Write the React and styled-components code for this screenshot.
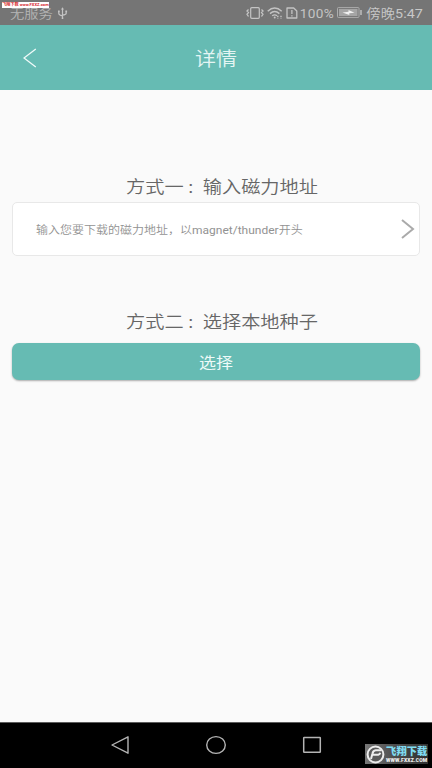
import React from 'react';
import styled, { createGlobalStyle } from 'styled-components';

const GlobalStyle = createGlobalStyle`
  * {
    box-sizing: border-box;
  }

  body {
    margin: 0;
    background-color: #fafafa;
    font-family: Roboto, 'Noto Sans CJK SC', sans-serif;
  }
`;

const Screen = styled.div`
  width: 432px;
  height: 768px;
  display: flex;
  flex-direction: column;
  background-color: #fafafa;
  overflow: hidden;
`;

const Text = styled.span`
  display: block;
  white-space: nowrap;
  line-height: 1;
  font-weight: ${({ $weight }) => $weight || 350};
  font-size: ${({ $size }) => $size}px;
  letter-spacing: ${({ $spacing }) => $spacing || 0}px;
  color: ${({ $color }) => $color};
  transform: scaleY(0.9);
`;

const Latin = styled.span`
  font-weight: 400;
`;

const StatusBar = styled.div`
  position: relative;
  display: flex;
  align-items: center;
  height: 25px;
  flex-shrink: 0;
  padding: 1px 9px 0 10px;
  background-color: #757575;
`;

const StatusIcons = styled.div`
  display: flex;
  align-items: center;
  margin-left: auto;
`;

const Icon = styled.svg`
  display: block;
  flex-shrink: 0;
  margin-left: ${({ $gap }) => $gap || 0}px;
  fill: none;
  stroke: ${({ $color }) => $color || '#c4c4c4'};
`;

const StatusText = styled(Text)`
  margin-left: ${({ $gap }) => $gap || 0}px;
  padding-top: ${({ $top }) => $top || 1}px;
`;

const SiteTag = styled.div`
  position: absolute;
  top: 2px;
  left: 2px;
  width: 47px;
  height: 6px;
  display: flex;
  align-items: center;
  justify-content: center;
  gap: 1px;
  background-color: #fff;
  color: #d8262c;
  font-size: 4.1px;
  font-weight: 700;
  line-height: 6px;
  white-space: nowrap;
`;

const Header = styled.header`
  display: grid;
  grid-template-columns: 60px 1fr 60px;
  align-items: center;
  justify-items: center;
  height: 65px;
  flex-shrink: 0;
  padding-top: 5px;
  background-color: #66bbb3;
`;

const BackButton = styled.button`
  display: flex;
  margin-bottom: 5px;
  padding: 0;
  border: 0;
  background: none;
`;

const Content = styled.main`
  flex: 1;
  padding: 88px 12px 0;
`;

const Section = styled.section`
  display: flex;
  flex-direction: column;
  align-items: center;
  margin-bottom: ${({ $bottom }) => $bottom || 0}px;
`;

const SectionTitle = styled(Text)`
  height: 19px;
  margin-bottom: ${({ $bottom }) => $bottom}px;
  padding-left: 12px;
`;

const Colon = styled.span`
  display: inline-block;
  width: 19.2px;
  padding-left: 3.2px;
  font-size: 16px;
`;

const AddressField = styled.div`
  display: flex;
  align-items: center;
  justify-content: space-between;
  width: 100%;
  height: 54px;
  padding: 0 4px 0 23px;
  border: 1px solid #e8e8e8;
  border-radius: 5px;
  background-color: #fff;
`;

const Hint = styled(Text)`
  padding-top: 3px;
`;

const SelectButton = styled.button`
  display: flex;
  align-items: center;
  justify-content: center;
  width: 100%;
  height: 37px;
  padding: 3px 0 0;
  border: 0;
  border-radius: 7px;
  background-color: #66bbb3;
  box-shadow: 0 1px 2px rgba(0, 0, 0, 0.32);
  font-family: inherit;
`;

const NavBar = styled.nav`
  position: relative;
  display: flex;
  align-items: center;
  justify-content: center;
  gap: 76px;
  height: 46px;
  flex-shrink: 0;
  padding-bottom: 1px;
  border-top: 1px solid #5c5c5c;
  background-color: #000;
`;

const Watermark = styled.div`
  position: absolute;
  left: 365px;
  top: 21px;
  width: 63px;
  height: 20px;
  display: flex;
  align-items: center;
  gap: 1px;
  padding-left: 1px;
  background: linear-gradient(90deg, #777, #4a4a4a 50%, #303030);
`;

const WatermarkText = styled.div`
  display: flex;
  flex-direction: column;
  align-items: center;
  white-space: nowrap;
`;

const BrandName = styled.span`
  color: #7fdcf2;
  font-size: 10.3px;
  font-weight: 900;
  line-height: 12px;
`;

const BrandUrl = styled.span`
  color: #f2f2f2;
  font-size: 5px;
  font-weight: 900;
  line-height: 5px;
  letter-spacing: 0.2px;
`;

const UsbIcon = () => (
  <Icon $gap={4} width="11" height="13" viewBox="0 0 11 13" strokeWidth="1.2">
    <path d="M5.5 2v9M1.8 4.5v2q0 1.6 3.7 2.3M9.2 4.5v1.7q0 1.4-3.7 2" />
    <path d="M5.5 0.3L4 2.6h3zM1 3.6h1.7v1.6H1zM8.4 3.6h1.7v1.6H8.4zM4.7 10.6h1.6v1.4H4.7z" fill="#c4c4c4" stroke="none" />
  </Icon>
);

const VibrateIcon = () => (
  <Icon width="18" height="12" viewBox="0 0 18 12">
    <rect x="4.7" y="0.7" width="8.6" height="10.6" rx="1" strokeWidth="1.2" />
    <path d="M2.5 2.5L1 4l1.5 1.5L1 7.2l1.5 2.3M15.5 2.5L17 4l-1.5 1.5L17 7.2l-1.5 2.3" strokeWidth="1.3" />
  </Icon>
);

const WifiIcon = () => (
  <Icon $gap={3} width="17" height="12" viewBox="0 0 17 12" strokeWidth="1.4">
    <path d="M0.7 4.2q7-6.2 14 0M3 6.6q4.7-4 9.4 0M5.2 8.8q2.5-1.9 4.8 0" />
    <circle cx="7.7" cy="10.6" r="1" fill="#c4c4c4" stroke="none" />
    <path d="M10.8 8.8v2.6M14 8.8v2.6" strokeDasharray="1.3 0.6" />
  </Icon>
);

const SimIcon = () => (
  <Icon $gap={2} width="12" height="12" viewBox="0 0 12 12" strokeWidth="1.3">
    <path d="M1 1h6.7L10.8 4v7H1z" strokeLinejoin="round" />
    <path d="M5.9 3v4M5.9 8.2v1.4" />
  </Icon>
);

const BatteryIcon = () => (
  <Icon $gap={3} width="25" height="11" viewBox="0 0 25 11">
    <rect x="0.5" y="0.6" width="21.5" height="9.8" rx="0.8" stroke="#adadad" />
    <rect x="2" y="2" width="18.5" height="7" fill="#a5a5a5" stroke="none" />
    <path d="M5.5 5.4l6-.7V3l6 2.7-5.2.6v1.8z" fill="#f0f0f0" stroke="none" />
    <path d="M24 3v5" strokeWidth="1.4" />
  </Icon>
);

const BrandLogo = () => (
  <Icon width="19" height="19" viewBox="0 0 19 19">
    <circle cx="9.5" cy="9.5" r="7.9" fill="#5a5a5a" stroke="#ededed" strokeWidth="2" />
    <path d="M15 5.2H9.6Q7 5.6 6.5 8.5L5 14M6.5 9.7h5.8q1.6-.3 2-2" stroke="#ededed" strokeWidth="2" />
  </Icon>
);

const App = () => {
  return (
    <>
      <GlobalStyle />
      <Screen>
        <StatusBar>
          <Text $size={14.3} $color="#b5b5b5">无服务</Text>
          <UsbIcon />
          <StatusIcons>
            <VibrateIcon />
            <WifiIcon />
            <SimIcon />
            <StatusText $gap={2} $size={13.6} $spacing={0.4} $weight={400} $color="#c4c4c4">100%</StatusText>
            <BatteryIcon />
            <StatusText $gap={4} $top={2} $size={14.3} $spacing={0.1} $color="#c8c8c8">
              傍晚<Latin>5:47</Latin>
            </StatusText>
          </StatusIcons>
          <SiteTag>
            <span>飞翔下载</span>
            <span>www.FXXZ.com</span>
          </SiteTag>
        </StatusBar>

        <Header>
          <BackButton aria-label="返回">
            <Icon width="14" height="20" viewBox="0 0 14 20" $color="#f0faf9" strokeWidth="1.3">
              <path d="M12.8 1L1 10l11.8 9" />
            </Icon>
          </BackButton>
          <Text $size={21} $color="#e4f5f3">详情</Text>
        </Header>

        <Content>
          <Section $bottom={57}>
            <SectionTitle $bottom={5} $size={19.2} $color="#666">
              方式一<Colon>：</Colon>输入磁力地址
            </SectionTitle>
            <AddressField>
              <Hint $size={12} $color="#929292">
                输入您要下载的磁力地址，以<Latin>magnet/thunder</Latin>开头
              </Hint>
              <Icon width="14" height="20" viewBox="0 0 14 20" $color="#aaa" strokeWidth="2">
                <path d="M1 1l11 9-11 9" />
              </Icon>
            </AddressField>
          </Section>
          <Section>
            <SectionTitle $bottom={11} $size={19.2} $color="#666">
              方式二<Colon>：</Colon>选择本地种子
            </SectionTitle>
            <SelectButton>
              <Text $size={17} $weight={400} $color="#eefaf8">选择</Text>
            </SelectButton>
          </Section>
        </Content>

        <NavBar>
          <Icon width="20" height="20" viewBox="0 0 20 20" $color="#b4b4b4" strokeWidth="1.4">
            <path d="M18 1.8v16.4L2 10z" strokeLinejoin="round" />
          </Icon>
          <Icon width="20" height="20" viewBox="0 0 20 20" $color="#b4b4b4" strokeWidth="1.4">
            <ellipse cx="10" cy="10" rx="9.3" ry="8.4" />
          </Icon>
          <Icon width="20" height="20" viewBox="0 0 20 20" $color="#b4b4b4" strokeWidth="1.5">
            <rect x="1.7" y="2.5" width="16.6" height="14.8" rx="0.5" />
          </Icon>
          <Watermark>
            <BrandLogo />
            <WatermarkText>
              <BrandName>飞翔下载</BrandName>
              <BrandUrl>WWW.FXXZ.COM</BrandUrl>
            </WatermarkText>
          </Watermark>
        </NavBar>
      </Screen>
    </>
  );
};

export default App;
